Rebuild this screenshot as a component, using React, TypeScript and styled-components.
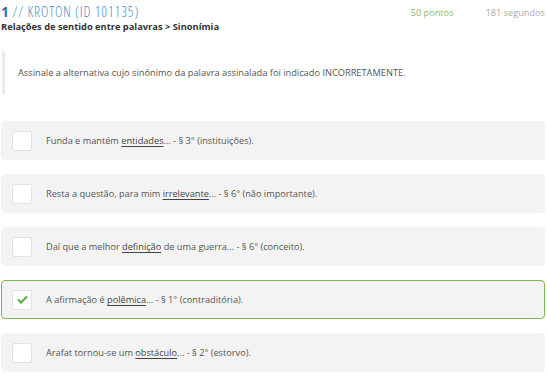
import React from 'react';
import styled, { createGlobalStyle } from 'styled-components';

const GlobalStyle = createGlobalStyle`
  body {
    margin: 0;
    background: #fff;
    font-family: 'Open Sans', 'Liberation Sans', sans-serif;
  }
`;

const Page = styled.div`
  width: 547px;
  padding: 3px 2px 0 1px;
  box-sizing: border-box;
`;

const Header = styled.div`
  display: flex;
  justify-content: space-between;
  align-items: flex-start;
`;

const TitleBlock = styled.div`
  display: flex;
  flex-direction: column;
`;

const Title = styled.div`
  font-size: 14px;
  line-height: 17px;
  font-weight: 300;
  font-stretch: 75%;
  letter-spacing: 0.9px;
  color: #4a90c8;
`;

const Number = styled.span`
  font-weight: 700;
  font-size: 14px;
  font-stretch: 100%;
  letter-spacing: 0;
  color: #2f6fa6;
`;

const Subtitle = styled.div`
  font-size: 9.3px;
  font-weight: 700;
  line-height: 13px;
  color: #333;
`;

const Stats = styled.div`
  display: flex;
  gap: 32px;
  font-size: 9.2px;
  line-height: 17px;
  padding-top: 1px;
`;

const Stat = styled.span<{ $color: string }>`
  color: ${(p) => p.$color};
`;

const Statement = styled.div`
  margin: 18px 0 0 1px;
  border-left: 3px solid #ebebeb;
  height: 43px;
  display: flex;
  align-items: center;
  padding-left: 13px;
  font-size: 9.25px;
  color: #555;
`;

const Options = styled.div`
  display: flex;
  flex-direction: column;
  gap: 14px;
  margin-top: 27px;
`;

const Option = styled.div<{ $selected?: boolean }>`
  display: flex;
  align-items: center;
  height: 39px;
  box-sizing: border-box;
  background: #f3f3f3;
  border-radius: 4px;
  border: 1px solid ${(p) => (p.$selected ? '#7cb84a' : '#f3f3f3')};
  padding-left: 10px;
  font-size: 9.2px;
  color: #555;
`;

const Check = styled.div`
  width: 20px;
  height: 20px;
  box-sizing: border-box;
  background: #fff;
  border: 1px solid #e2e2e2;
  border-radius: 2px;
  display: flex;
  align-items: center;
  justify-content: center;
  margin-right: 14px;
  flex-shrink: 0;
`;

const Word = styled.span`
  text-decoration: underline;
  text-underline-offset: 2px;
  color: #444;
`;

const options = [
  { pre: 'Funda e mantém ', word: 'entidades', post: '... - § 3° (instituições).' },
  { pre: 'Resta a questão, para mim ', word: 'irrelevante', post: '... - § 6° (não importante).' },
  { pre: 'Daí que a melhor ', word: 'definição', post: ' de uma guerra... - § 6° (conceito).' },
  { pre: 'A afirmação é ', word: 'polêmica', post: '... - § 1° (contraditória).', selected: true },
  { pre: 'Arafat tornou-se um ', word: 'obstáculo', post: '... - § 2° (estorvo).' },
];

export default function App() {
  return (
    <Page>
      <GlobalStyle />
      <Header>
        <TitleBlock>
          <Title>
            <Number>1</Number> // KROTON (ID 101135)
          </Title>
          <Subtitle>Relações de sentido entre palavras &gt; Sinonímia</Subtitle>
        </TitleBlock>
        <Stats>
          <Stat $color="#8dba66">50 pontos</Stat>
          <Stat $color="#aaaaaa">181 segundos</Stat>
        </Stats>
      </Header>
      <Statement>
        Assinale a alternativa cujo sinônimo da palavra assinalada foi indicado INCORRETAMENTE.
      </Statement>
      <Options>
        {options.map((o, i) => (
          <Option key={i} $selected={o.selected}>
            <Check>
              {o.selected && (
                <svg width="11" height="9" viewBox="0 0 11 9">
                  <path d="M1 4.5 L4 7.5 L10 1.5" fill="none" stroke="#5cb04a" strokeWidth="2.2" />
                </svg>
              )}
            </Check>
            <span>
              {o.pre}
              <Word>{o.word}</Word>
              {o.post}
            </span>
          </Option>
        ))}
      </Options>
    </Page>
  );
}
